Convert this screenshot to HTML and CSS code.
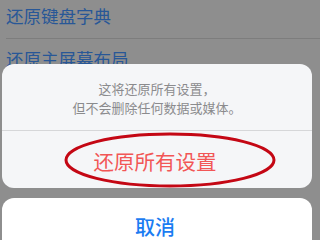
FILE: index.html
```html
<!DOCTYPE html>
<html lang="zh">
<head>
<meta charset="utf-8">
<link rel="stylesheet" href="styles.css">
</head>
<body>
<div class="list">
  <div class="row first">还原键盘字典</div>
  <div class="row">还原主屏幕布局</div>
</div>
<div class="overlay">
  <div class="sheet">
    <div class="message">
      <div>这将还原所有设置，</div>
      <div>但不会删除任何数据或媒体。</div>
    </div>
    <div class="action">
      <span class="destructive">还原所有设置</span>
      <svg class="ring" width="212" height="56" viewBox="0 0 212 56">
        <ellipse cx="106" cy="28" rx="104" ry="26" fill="none" stroke="#c40714" stroke-width="3"/>
      </svg>
    </div>
  </div>
  <div class="sheet cancel">
    <span class="cancel-text">取消</span>
  </div>
</div>
</body>
</html>
```
FILE: styles.css
```css
html, body {
  margin: 0;
  padding: 0;
}
body {
  width: 320px;
  height: 240px;
  overflow: hidden;
  background: #8e8e8e;
  font-family: "Noto Sans CJK SC", "Noto Sans", sans-serif;
  position: relative;
}
.list {
  padding-left: 6px;
}
.row {
  height: 39px;
  line-height: 31px;
  font-size: 17.5px;
  color: #285797;
  box-sizing: border-box;
}
.row.first {
  border-bottom: 1px solid #7d7d7d;
}
.row + .row {
  line-height: 40px;
}
.overlay {
  position: absolute;
  left: 2px;
  top: 64px;
  width: 310px;
  display: flex;
  flex-direction: column;
  gap: 10px;
}
.sheet {
  background: #f5f6f8;
  border-radius: 12px;
  overflow: hidden;
}
.message {
  height: 67px;
  box-sizing: border-box;
  border-bottom: 1px solid #d6d7d9;
  display: flex;
  flex-direction: column;
  align-items: center;
  justify-content: center;
  font-size: 13px;
  line-height: 19px;
  color: #8b8b8d;
  padding-top: 2px;
}
.action {
  height: 57px;
  position: relative;
  display: flex;
  align-items: center;
  justify-content: center;
}
.destructive {
  font-size: 20.5px;
  color: #f25656;
  margin-left: -4px;
  margin-top: 2px;
}
.ring {
  position: absolute;
  left: 62px;
  top: 1px;
}
.cancel {
  background: #ffffff;
  height: 42px;
  border-radius: 12px 12px 0 0;
  display: flex;
  justify-content: center;
  padding-top: 18px;
  box-sizing: border-box;
}
.cancel-text {
  font-size: 20px;
  font-weight: 500;
  color: #1b7cf2;
  line-height: 21px;
  margin-left: -4px;
}
```
